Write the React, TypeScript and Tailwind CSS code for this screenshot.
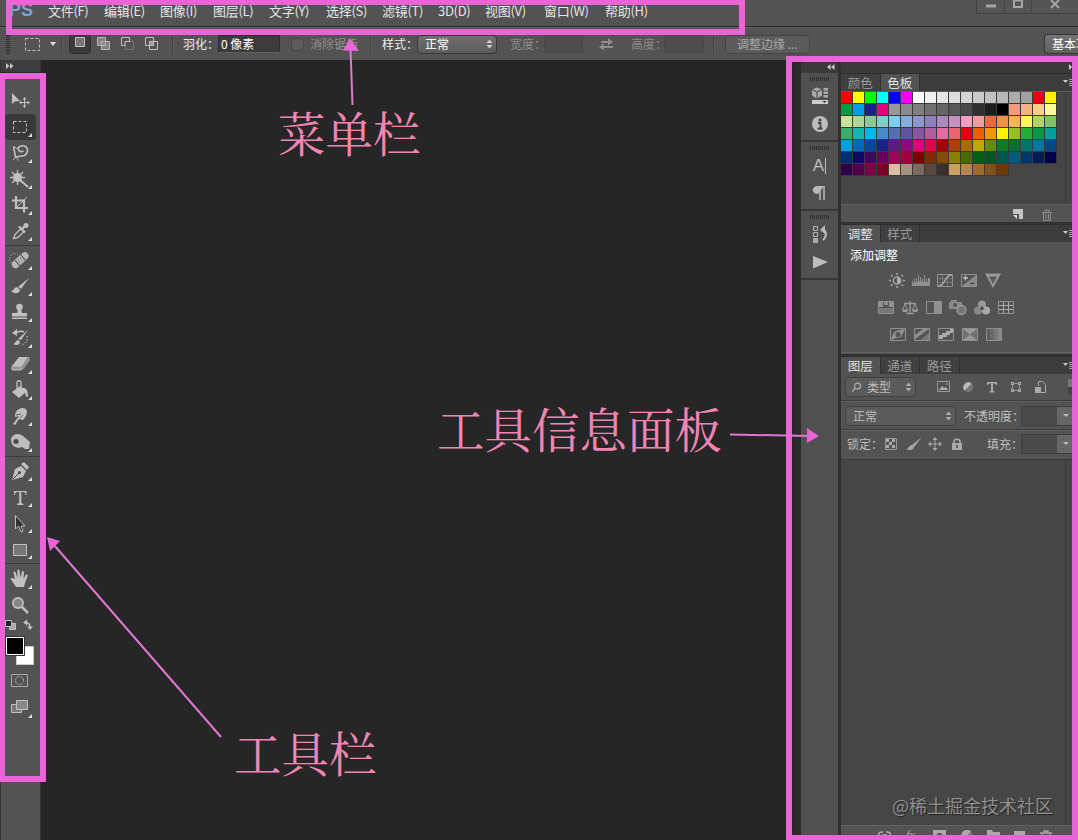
import React from 'react';

type Kids = { children?: React.ReactNode };

function Svg({ w, h, className = '', children }: Kids & { w: number; h: number; className?: string }) {
  return (
    <svg width={w} height={h} viewBox={`0 0 ${w} ${h}`} className={`block shrink-0 ${className}`} fill="none">
      {children}
    </svg>
  );
}

const L = '#c0c0c0';
const M = '#8e8e8e';

/* ---------- menu bar ---------- */

const menus = [
  { t: '文件(F)', w: 'w-[56px]' },
  { t: '编辑(E)', w: 'w-[56px]' },
  { t: '图像(I)', w: 'w-[53px]' },
  { t: '图层(L)', w: 'w-[56px]' },
  { t: '文字(Y)', w: 'w-[57px]' },
  { t: '选择(S)', w: 'w-[56px]' },
  { t: '滤镜(T)', w: 'w-[56px]' },
  { t: '3D(D)', w: 'w-[47px]' },
  { t: '视图(V)', w: 'w-[59px]' },
  { t: '窗口(W)', w: 'w-[61px]' },
  { t: '帮助(H)', w: 'w-[60px]' },
];

function MenuBar() {
  return (
    <header className="flex h-[27px] shrink-0 items-start border-b border-[#2c2c2c] bg-[#535353]">
      <div className="h-[22px] w-[48px] shrink-0 pl-[9px] font-['Liberation_Sans'] text-[18px] leading-[20px] font-bold text-[#7ba3d6]">PS</div>
      <nav className="flex h-[21px] items-center text-[13px] tracking-[-0.3px] text-[#e6e6e6]">
        {menus.map((m) => (
          <span key={m.t} className={`shrink-0 whitespace-nowrap ${m.w}`}>{m.t}</span>
        ))}
      </nav>
      <div className="ml-auto flex h-[14px] w-[102px] border-b border-l border-[#3f3f3f] bg-[#555]">
        <div className="w-[28px] border-r border-[#444]">
          <Svg w={27} h={13}><path d="M9 6h10" stroke="#a5a5a5" strokeWidth="3" /></Svg>
        </div>
        <div className="w-[27px] border-r border-[#444]">
          <Svg w={26} h={13}><path d="M9 .5h8v6.500H9z" stroke="#a5a5a5" strokeWidth="2" /></Svg>
        </div>
        <Svg w={46} h={13}><path d="M19 0l8 8M27 0l-8 8" stroke="#a5a5a5" strokeWidth="2" /></Svg>
      </div>
    </header>
  );
}

/* ---------- options bar ---------- */

function UpDown({ color = '#d0d0d0' }: { color?: string }) {
  return (
    <Svg w={7} h={10}>
      <path d="M0.5 4L3.5 0.5L6.5 4zM0.5 6L3.5 9.5L6.5 6z" fill={color} />
    </Svg>
  );
}

function Rule({ className }: { className: string }) {
  return <div className={`h-[20px] w-[2px] shrink-0 border-r border-l border-r-[#5c5c5c] border-l-[#404040] ${className}`} />;
}

function OptionsBar() {
  return (
    <div className="flex h-[33px] shrink-0 items-center overflow-hidden border-t border-[#5e5e5e] bg-[#535353] text-[12px] leading-none whitespace-nowrap text-[#eee]">
      <Svg w={4} h={19} className="ml-[6px]"><path d="M2 0v19" stroke="#2f2f2f" strokeWidth="4" strokeDasharray="1 1" /></Svg>
      <Svg w={15} h={13} className="ml-[15px]"><path d="M.5 .5h14v12H.5z" stroke={L} strokeDasharray="3 2" /></Svg>
      <Svg w={6} h={4} className="ml-[10px]"><path d="M0 0h6L3 4z" fill="#ddd" /></Svg>
      <Rule className="ml-[5px]" />
      <div className="ml-[6px] flex h-[20px] w-[22px] shrink-0 items-start justify-center rounded-sm border border-[#303030] bg-[#3b3b3b] pt-[2px]">
        <Svg w={10} h={11}><path d="M.5 .5h9v9h-9z" fill="#777" stroke={L} /></Svg>
      </div>
      <Svg w={14} h={14} className="ml-[6px]">
        <path d="M.5 .5h8v8h-8zM4.5 4.5h8v8h-8z" fill="#858585" stroke="#b5b5b5" />
      </Svg>
      <Svg w={14} h={14} className="ml-[10px]">
        <path d="M4.5 4.5h8v8h-8z" stroke="#757575" /><path d="M8.5 4V.5h-8v8H4v-4h5" stroke={L} />
      </Svg>
      <Svg w={14} h={14} className="ml-[10px]">
        <path d="M4.5 4.5h4v4h-4z" fill="#999" /><path d="M.5 .5h8v8h-8zM4.5 4.5h8v8h-8z" stroke={L} />
      </Svg>
      <Rule className="ml-[13px]" />
      <span className="ml-[9px] w-[35px] shrink-0">羽化：</span>
      <div className="flex h-[18px] w-[62px] shrink-0 items-center border border-[#2f2f2f] border-b-[#606060] bg-[#3b3b3b] pl-[2px] text-white">0 像素</div>
      <div className="ml-[11px] h-[13px] w-[13px] shrink-0 rounded-sm border border-[#454545] bg-[#5c5c5c]" />
      <span className="ml-[6px] w-[48px] shrink-0 text-[#909090]">消除锯齿</span>
      <Rule className="ml-[12px]" />
      <span className="ml-[10px] w-[35px] shrink-0">样式：</span>
      <div className="flex h-[19px] w-[80px] shrink-0 items-center justify-between rounded-sm border border-[#383838] bg-linear-to-b from-[#707070] to-[#5c5c5c] pr-[3px] pl-[7px] text-white">
        正常<UpDown />
      </div>
      <span className="ml-[13px] w-[34px] shrink-0 text-[#8c8c8c]">宽度：</span>
      <div className="h-[18px] w-[39px] shrink-0 border border-[#484848] bg-[#4d4d4d]" />
      <Svg w={15} h={13} className="ml-[16px]">
        <path d="M2 4h8M5 9h9" stroke={M} strokeWidth="2" /><path d="M9 0l5 4-5 3.500zM5 5.500v7L0 9z" fill={M} />
      </Svg>
      <span className="ml-[17px] w-[33px] shrink-0 text-[#8c8c8c]">高度：</span>
      <div className="h-[18px] w-[40px] shrink-0 border border-[#484848] bg-[#4d4d4d]" />
      <Rule className="ml-[9px]" />
      <div className="ml-[10px] flex h-[19px] w-[85px] shrink-0 items-center rounded-sm border border-[#444] bg-[#5b5b5b] pl-[11px] text-[#a8a8a8]">调整边缘 ...</div>
      <div className="ml-auto flex h-[20px] w-[34px] shrink-0 items-center overflow-hidden rounded-l-sm border border-r-0 border-[#363636] bg-linear-to-b from-[#747474] to-[#606060] pl-[7px] text-white">基本功能</div>
    </div>
  );
}

/* ---------- tool bar ---------- */

const toolGroups: { name: string; art: React.ReactNode; more?: boolean; on?: boolean }[][] = [
  [
    { name: 'move', art: <><path d="M7 5v11l3-2.500 5-.5z" fill={L} /><path d="M19.500 10v9M15 14.500h9" stroke={L} /><path d="M19.500 9l2 2.500h-4zM19.500 20l2-2.500h-4zM14 14.500l2.500-2v4zM25 14.500l-2.500-2v4z" fill={L} /></> },
    { name: 'marquee', more: true, on: true, art: <path d="M8.500 7.500h13v11h-13z" stroke={L} strokeDasharray="3 2" /> },
    { name: 'lasso', more: true, art: <><path d="M8.500 6.500l2 10.500 9-1.500c4-3 4-8 0-9.500-4-1-7 1-6 4 1 2 3 2 5 1" stroke={L} strokeWidth="1.600" /><path d="M8.500 6.500l5 2.500M11 17l-3 3M11 17l2.500 3.500" stroke={L} /></> },
    { name: 'wand', more: true, art: <><path d="M12.500 4v15M5 11.500h15M7 6l11 11M18 6L7 17" stroke={L} strokeWidth="1.300" /><circle cx="12.500" cy="11.500" r="4.500" fill={L} /><path d="M15 14l8 7" stroke={L} strokeWidth="2" /></> },
    { name: 'crop', more: true, art: <><path d="M11 4v12h12M7 8.500h12v12" stroke={L} strokeWidth="2.200" /><path d="M12 15L22 5" stroke={L} /></> },
    { name: 'eyedropper', more: true, art: <><path d="M8.500 20.500l1.500-4 6-6 3 3-6 6z" stroke={L} strokeWidth="1.300" /><path d="M14 8.500l6 6M17 11l4-4" stroke={L} strokeWidth="2.200" /><circle cx="21" cy="7.500" r="2.500" fill={L} /></> },
  ],
  [
    { name: 'heal', more: true, art: <><circle cx="10" cy="12" r="5.500" stroke={L} strokeDasharray="1 1.500" /><g transform="rotate(-42 15 13)"><rect x="5" y="9.500" width="20" height="7.500" rx="3.700" fill="#b8b8b8" /><path d="M11 10v7M19 10v7" stroke="#555" /><path d="M13 12h1M16 12h1M13 14.500h1M16 14.500h1" stroke="#444" /></g></> },
    { name: 'brush', more: true, art: <><path d="M24 5l-8 11-3-2z" fill={L} /><path d="M6 18c3 0 3-4 6-4l3 3c0 3-5 5-9 1z" fill={L} /></> },
    { name: 'stamp', more: true, art: <><circle cx="14.500" cy="8" r="3.300" fill={L} /><path d="M13 10h3l1 4h5v3.500H7V14h5zM7 18.500h15V20H7z" fill={L} /></> },
    { name: 'history', more: true, art: <><path d="M23 5l-7 10-3-1z" fill={L} /><path d="M8 19c2 0 3-4 5-4l2 2c0 3-4 4-7 2z" fill={L} /><path d="M10 8c4-2 7-2 9-1" stroke={L} strokeWidth="1.500" /><path d="M7 8l5-4v7z" fill={L} /><path d="M22 11c1 5-1 8-6 9" stroke={L} strokeDasharray="1.500 1.500" /></> },
    { name: 'eraser', more: true, art: <><path d="M7 15l7-9h9l-6 9z" fill={L} /><path d="M7 15v4h9v-4z" fill="#999" stroke={L} /><path d="M17 15v4l7-9V6z" fill="#8c8c8c" stroke="#b0b0b0" strokeWidth=".700" /></> },
    { name: 'bucket', more: true, art: <><path d="M7 15l8-6 6 6-7 6z" fill={L} /><path d="M12 14V6c0-3 4-3 4 0v5" stroke={L} strokeWidth="1.300" /><path d="M16 11c5-1 7 2 7 9-2 0-3-2-3-5z" fill={L} /></> },
    { name: 'smudge', more: true, art: <><path d="M8 21l6-8-4 1c0-5 2-8 7-9 5 0 6 3 4 8l-3 4-4-1-4 6z" fill={L} /><path d="M11 12l5-1M15 15l3-3" stroke="#666" /></> },
    { name: 'sponge', more: true, art: <><path d="M6 10c2-6 8-6 12-3l7 6-1 7h-4l-3-2c-5 2-11 0-11-8z" fill="#bdbdbd" /><circle cx="11" cy="12.500" r="2.500" fill="#444" stroke="#777" /></> },
  ],
  [
    { name: 'pen', more: true, art: <><path d="M7 22l3-11 6-3 5 5-3 6z" fill={L} /><path d="M16 6l3-2 5 5-2 3z" fill={L} /><path d="M8 21l6-6" stroke="#444" /><circle cx="14.500" cy="14.500" r="1.500" fill="#444" /></> },
    { name: 'type', more: true, art: <path d="M9 7h12.500v4h-.8c-.2-2-1-3-2.700-3h-1.700v11l2.200 1v1H12v-1l2.200-1V8h-1.700c-1.700 0-2.500 1-2.700 3H9z" fill={L} /> },
    { name: 'path', more: true, art: <path d="M10.500 5.500V19l3-3 2.500 6 2-1-2-5h4z" fill="#303030" stroke={L} /> },
    { name: 'rectangle', more: true, art: <path d="M8.500 8.500h13v11h-13z" fill="#777" stroke={L} /> },
  ],
  [
    { name: 'hand', more: true, art: <path d="M11 21L6 13.500c-.5-2 2-2 4 0L8.500 7c0-2 2-2 2.300 0L12.500 12l-.2-7c0-2 2.200-2 2.300 0l.9 7 1.300-6c.5-1.800 2.400-1.200 2.200.5L18.500 13l2-4c1-1.500 2.800-.5 2 1.200L20 17l-1 4z" fill={L} /> },
    { name: 'zoom', art: <><circle cx="13" cy="11" r="5" fill="#858585" stroke={L} strokeWidth="1.800" /><path d="M17 15l6 6" stroke={L} strokeWidth="2.500" /></> },
  ],
];

function ToolBar() {
  return (
    <aside className="flex h-full w-[41px] shrink-0 flex-col border-r border-l border-[#333] bg-[#535353]">
      <div className="flex h-[13px] shrink-0 items-center border-b border-[#2a2a2a] bg-[#3d3d3d] pl-[5px]">
        <Svg w={8} h={6}><path d="M0 0l3.500 3L0 6zM4 0l3.500 3L4 6z" fill="#c8c8c8" /></Svg>
      </div>
      <div className="flex flex-col pt-[15px] pl-[4px]">
        {toolGroups.map((g, i) => (
          <div key={i} className={i === 0 ? 'flex flex-col pb-px' : i === 3 ? 'flex flex-col border-t border-[#3b3b3b] pt-[2px] pb-px' : 'flex flex-col border-t border-[#3b3b3b] pt-px pb-px'}>
            {g.map((t) => (
              <div key={t.name} className={t.on ? 'h-[26px] w-[31px] rounded-sm bg-[#393939]' : 'h-[26px] w-[31px]'}>
                <Svg w={31} h={26}>
                  {t.art}
                  {t.more && <path d="M27 19v4h-4z" fill="#ddd" />}
                </Svg>
              </div>
            ))}
          </div>
        ))}
        <Svg w={31} h={14}>
          <path d="M4.500 4.500h6v6h-6z" fill="#aaa" stroke={L} /><path d="M.5 1.500h6v6h-6z" fill="#222" stroke={L} />
          <path d="M20 3.500c4 0 5 2 5 5" stroke={L} strokeWidth="1.500" /><path d="M18 3.500l4-3v6zM25 11l-3-3.500h6z" fill={L} />
        </Svg>
        <Svg w={31} h={34}>
          <path d="M11.500 13.500h17v18h-17z" fill="#fff" stroke="#ccc" />
          <path d="M1.500 4.500h17v17h-17z" fill="#000" stroke="#fff" /><path d="M.5 3.500h19v19H.5z" stroke="#333" />
        </Svg>
        <Svg w={31} h={26}>
          <path d="M6.500 7.500h16v12h-16z" stroke="#a8a8a8" /><circle cx="14.500" cy="13.500" r="4" stroke={L} strokeDasharray="1.500 1" />
        </Svg>
        <Svg w={31} h={28}>
          <path d="M6.500 11.500h10v8h-10z" fill="#777" stroke={L} /><path d="M11.500 7.500h11v9h-11z" fill="#888" stroke={L} /><path d="M27 21v4h-4z" fill="#ddd" />
        </Svg>
      </div>
    </aside>
  );
}

/* ---------- collapsed dock ---------- */

function DockGroup({ children }: Kids) {
  return (
    <div className="flex h-[69px] shrink-0 flex-col items-center border-b-2 border-[#383838] pt-[4px]">
      <Svg w={20} h={4}><path d="M0 2h20" stroke="#2f2f2f" strokeWidth="4" strokeDasharray="1 1" /></Svg>
      <div className="flex flex-col pt-[2px]">{children}</div>
    </div>
  );
}

function Dock() {
  return (
    <div className="flex w-[37px] shrink-0 flex-col bg-[#505050]">
      <div className="flex h-[13px] shrink-0 items-center bg-[#3a3a3a] pl-[26px]">
        <Svg w={8} h={6}><path d="M3.500 0v6L0 3zM7.500 0v6L4 3z" fill="#c8c8c8" /></Svg>
      </div>
      <DockGroup>
        <Svg w={20} h={28}>
          <path d="M7 4.500l5 2v6l-5 3-5-3v-6z" fill="#aaa" /><path d="M2 6.500L7 9l5-2.500M7 9v6.500" stroke="#444" />
          <path d="M13.500 5h4.500v2.500h-4.500zM13.500 8.500h4.500v2.500h-4.500zM13.500 12h4.500v2.500h-4.500z" fill="#aaa" /><path d="M2 17h16v4H2z" fill="#ccc" /><path d="M12.500 18h4l-2 2z" fill="#333" />
        </Svg>
        <Svg w={20} h={28}>
          <circle cx="10" cy="13" r="8" fill="#bdbdbd" /><circle cx="10" cy="9" r="1.600" fill="#444" /><path d="M8 12h2.500v6M7.500 17.500h5" stroke="#444" strokeWidth="1.800" />
        </Svg>
      </DockGroup>
      <DockGroup>
        <div className="flex h-[28px] w-[20px] items-center justify-center font-['Liberation_Sans'] text-[17px] text-[#bdbdbd]">A<span className="ml-px h-[16px] w-px shrink-0 bg-[#bdbdbd]" /></div>
        <Svg w={20} h={28}>
          <path d="M14 6H8c-7 0-7 8 0 8z" fill="#b8b8b8" /><path d="M10 6v14M14 6v14" stroke="#bbb" strokeWidth="1.500" />
        </Svg>
      </DockGroup>
      <DockGroup>
        <Svg w={20} h={28}>
          <path d="M3.500 5.500h4v4h-4zM3.500 11.500h4v4h-4z" stroke="#b5b5b5" /><path d="M3 17h5v5H3z" fill="#aaa" />
          <path d="M11 9c5-1 7 5 2 10" stroke="#bbb" strokeWidth="2" /><path d="M10 9l5-5v9z" fill="#bbb" />
        </Svg>
        <Svg w={20} h={28}><path d="M3 7l15 6L3 19.500z" fill="#bdbdbd" /></Svg>
      </DockGroup>
    </div>
  );
}

/* ---------- panels ---------- */

function Tabs({ names, active }: { names: string[]; active: number }) {
  return (
    <div className="flex h-[18px] shrink-0 border-t border-[#2d2d2d] bg-[#3c3c3c] text-[12.500px] leading-[17px]">
      {names.map((n, i) => (
        <div
          key={n}
          className={
            i === active
              ? 'w-[39.500px] shrink-0 border-r border-[#303030] bg-[#535353] text-center text-[#e2e2e2]'
              : 'w-[39.500px] shrink-0 border-r border-[#303030] bg-[#404040] text-center text-[#999]'
          }
        >
          {n}
        </div>
      ))}
      <Svg w={12} h={10} className="mt-[4px] mr-[3px] ml-auto">
        <path d="M0 2h5L2.500 5z" fill="#ccc" /><path d="M6 1.500h6M6 3.500h6M6 5.500h6M6 7.500h6" stroke="#bbb" strokeWidth=".8" />
      </Svg>
    </div>
  );
}

const swatchRows = [
  'ff0000 ffff00 00ff00 00ffff 0000ff ff00ff ffffff efefef e4e4e4 dddddd d4d4d4 cacaca c0c0c0 b7b7b7 acacac a2a2a2 e60012 fff100',
  '009944 00a0e9 1d2088 e4007f 989898 8b8b8b 7f7f7f 717171 646464 575757 4a4a4a 303030 1e1e1e 000000 f29b76 f6b37f facd89 fff799',
  'cce198 acd598 89c997 84ccc9 7ecef4 88abda 8c97cb 8f82bc aa89bd c490bf f19ec2 f29c9f eb6841 f19149 f8b551 fff45c b3d465 80c269',
  '32b16c 13b5b1 00b7ee 448aca 556fb5 5f52a0 8957a1 ae5da1 ea68a2 e96671 e60012 eb6100 f39800 fff100 8fc31f 22ac38 009944 009e96',
  '00a0e9 0068b7 00479d 1d2088 601986 920783 e4007f e5004f a40000 a84200 ac6a00 b7aa00 638c0b 097c25 007130 00736d 0075a9 004986',
  '002e73 100964 440062 6a005f a4005b a0003b 7d0000 7f2d00 834e00 8a8000 486a00 005e15 00561f 005752 005982 00366f 001c58 02004b',
  '2f004c 500047 7b0046 78002a d6bfa6 a39480 796b60 594840 3c302b c9a063 b28850 9e6b2d 81511c 6a3906',
].map((r) => r.split(' '));

function SwatchPanel() {
  return (
    <section className="flex h-[149px] shrink-0 flex-col">
      <Tabs names={['颜色', '色板']} active={1} />
      <div className="flex h-[114px] shrink-0 border-t border-b border-t-[#5a5a5a] border-b-[#606060] bg-[#464646]">
        <div className="flex w-[225px] flex-col border-r border-[#3a3a3a]">
          {swatchRows.map((r, i) => (
            <div key={i} className="flex h-[12px] w-[216px]">
              {r.map((c, k) => (
                <div key={k} className="h-[12px] w-[12px] shrink-0 border-r border-b border-[#3a3a3a]" style={{ backgroundColor: `#${c}` }} />
              ))}
            </div>
          ))}
        </div>
      </div>
      <div className="flex grow items-center pt-[2px] pl-[172px]">
        <Svg w={11} h={11}><path d="M0 0h10v10H6V5H0z" fill="#c4c4c4" /><path d="M0 6l4 4V6z" fill="#ddd" /></Svg>
        <Svg w={12} h={12} className="ml-[17px]"><path d="M1 3.500h10M4 3V1h4v2M2.500 4v7.500h7V4M5 5v5M7.500 5v5" stroke="#8d8d8d" /></Svg>
      </div>
    </section>
  );
}

const box = <path d="M1.500 1.500h15v12h-15z" stroke="#909090" />;
const adjustments: { pad: string; icons: React.ReactNode[] }[] = [
  {
    pad: 'pl-[44px]',
    icons: [
      <><circle cx="9" cy="7.500" r="3.700" stroke="#aaa" strokeWidth="1.300" /><path d="M9 4a3.500 3.500 0 010 7z" fill="#aaa" /><path d="M9 0v2M9 13v2M1 7.500h2M15 7.500h2M3 2l1.500 1.500M13.500 11.500L15 13M15 2l-1.500 1.500M3 13l1.500-1.500" stroke="#aaa" strokeWidth="1.500" /></>,
      <path d="M0 13V8h1v2h1V6h1v3h1V5h1v4h1V2h1v6h1V4h1v4h1V6h1v3h1V2h1v7h1V6h1v3h1V5h2v8z" fill="#909090" />,
      <>{box}<path d="M6.500 2v11M11.500 2v11M2 5.500h14M2 9.500h14" stroke="#777" /><path d="M2 13c8 0 6-11 14-11" stroke="#aaa" strokeWidth="1.500" /></>,
      <>{box}<path d="M2 13L16 2v11z" fill="#8a8a8a" /><path d="M3 5h5M5.500 2.500v5" stroke="#bbb" strokeWidth="1.300" /><path d="M10 10.500h4" stroke="#444" strokeWidth="1.300" /></>,
      <><path d="M1 .5h16L9 15z" fill="#999" /><path d="M5 3.500h8L9 11z" fill="#5b5b5b" /></>,
    ],
  },
  {
    pad: 'pl-[33px]',
    icons: [
      <>{box}<path d="M2 2h4v5H2zM7 2h4v3H7zM12 2h4v5h-4z" fill="#909090" /><path d="M2 8h14v5H2z" fill="#777" /></>,
      <><path d="M9 1v12M3 3.500h12M5 13.500h8" stroke="#999" strokeWidth="1.500" /><path d="M4 4l-2.500 6h5zM14 4l-2.500 6h5z" stroke="#999" /><path d="M1 10h6l-1 2H2zM11 10h6l-1 2h-4z" fill="#999" /></>,
      <>{box}<path d="M9 2h7v11H9z" fill="#909090" /></>,
      <><path d="M0 2h2V0h6v2h5v7H0z" fill="#8a8a8a" /><circle cx="6" cy="5" r="2" fill="#555" /><circle cx="12.500" cy="10" r="4.500" fill="#777" stroke="#999" strokeWidth="1.300" /></>,
      <><circle cx="9" cy="4.500" r="4" fill="#999" /><circle cx="5" cy="10.500" r="4" fill="#8a8a8a" /><circle cx="13" cy="10.500" r="4" fill="#aaa" /><path d="M9 6l2.500 3.500h-5z" fill="#444" /></>,
      <>{box}<path d="M6.500 2v11M11.500 2v11M2 5.500h14M2 9.500h14" stroke="#aaa" /></>,
    ],
  },
  {
    pad: 'pl-[45px]',
    icons: [
      <>{box}<path d="M2 13c2-9 5-10 14-11l-4 8-5 1z" fill="#909090" /><circle cx="9" cy="7.500" r="2.500" fill="#555" /></>,
      <>{box}<path d="M2 8l8-6h6L2 12z" fill="#909090" /><path d="M7 13l9-7v7z" fill="#777" /></>,
      <>{box}<path d="M2 8h3V6h4V4h4V2h3v4h-3v2h-3v2H6v2H2z" fill="#aaa" /></>,
      <>{box}<path d="M2 2l7 5.500L2 13zM16 2L9 7.500l7 5.500z" fill="#707070" /><path d="M2 2h14L9 7.500zM2 13h14L9 7.500z" fill="#999" /></>,
      <>{box}<path d="M2 2h3v11H2z" fill="#5c5c5c" /><path d="M5 2h4v11H5z" fill="#6a6a6a" /><path d="M9 2h4v11H9z" fill="#787878" /><path d="M13 2h3v11h-3z" fill="#888" /></>,
    ],
  },
];

function AdjustPanel() {
  return (
    <section className="flex h-[132px] shrink-0 flex-col border-t-2 border-[#333]">
      <Tabs names={['调整', '样式']} active={0} />
      <div className="flex h-[111px] shrink-0 flex-col border-b border-[#626262] bg-[#535353] pt-[4px]">
        <div className="h-[21px] shrink-0 pl-[9px] text-[12px] leading-[18px] text-white">添加调整</div>
        {adjustments.map((row, i) => (
          <div key={i} className={`flex h-[27px] shrink-0 items-center ${row.pad}`}>
            {row.icons.map((icon, k) => (
              <div key={k} className="flex w-[24px] shrink-0 justify-center"><Svg w={18} h={15}>{icon}</Svg></div>
            ))}
          </div>
        ))}
      </div>
    </section>
  );
}

function ValueBox() {
  return (
    <div className="ml-auto flex h-[20px] w-[57px] shrink-0 border border-[#3e3e3e] bg-[#4a4a4a]">
      <div className="ml-[35px] flex grow items-center bg-[#666] pl-[6px]">
        <Svg w={6} h={4}><path d="M0 0h6L3 3z" fill="#bbb" /></Svg>
      </div>
    </div>
  );
}

function LayersPanel() {
  return (
    <section className="flex min-h-0 grow flex-col border-t-2 border-[#333] text-[12px] text-[#bdbdbd]">
      <Tabs names={['图层', '通道', '路径']} active={0} />
      <div className="flex h-[27px] shrink-0 items-center border-b border-[#3d3d3d] pl-[4px]">
        <div className="flex h-[20px] w-[71px] shrink-0 items-center rounded-sm border border-[#414141] bg-[#5b5b5b] pr-[3px] pl-[6px]">
          <Svg w={10} h={10}><circle cx="5.500" cy="4" r="3" stroke="#aaa" strokeWidth="1.300" /><path d="M3.500 6L0 9.500" stroke="#aaa" strokeWidth="1.500" /></Svg>
          <span className="mr-auto ml-[5px]">类型</span>
          <UpDown color="#aaa" />
        </div>
        <Svg w={14} h={12} className="ml-[21px]"><path d="M.5 .5h12v10H.5z" stroke="#999" /><path d="M2 9l3-4 2 2 2-1 2 3z" fill="#aaa" /><path d="M9 3h2" stroke="#aaa" /></Svg>
        <Svg w={12} h={12} className="ml-[11px]"><circle cx="6" cy="6" r="5" fill="#777" /><path d="M9.500 2.500A5 5 0 002.500 9.500z" fill="#bbb" /></Svg>
        <Svg w={12} h={12} className="ml-[12px]"><path d="M1 1h10v3h-1L9 2.500H7V10l1.500.5v1h-5v-1L5 10V2.500H3L2 4H1z" fill="#aaa" /></Svg>
        <Svg w={12} h={12} className="ml-[12px]"><path d="M2.500 2.500h7v7h-7z" stroke="#999" /><path d="M1 1h3v3H1zM8 1h3v3H8zM1 8h3v3H1zM8 8h3v3H8z" fill="#aaa" /><path d="M2 2h1v1H2zM9 2h1v1H9zM2 9h1v1H2zM9 9h1v1H9z" fill="#555" /></Svg>
        <Svg w={12} h={12} className="ml-[12px]"><path d="M4.500 5V.5h4l3 3v8H7" stroke="#aaa" /><path d="M1 6h6v6H1z" fill="#aaa" /></Svg>
        <div className="ml-auto h-[16px] w-[10px] shrink-0 bg-[#444]"><div className="h-[8px] bg-[#777]" /></div>
      </div>
      <div className="flex h-[29px] shrink-0 items-center border-t border-b border-t-[#606060] border-b-[#3d3d3d] pl-[4px]">
        <div className="flex h-[20px] w-[111px] shrink-0 items-center justify-between rounded-sm border border-[#414141] bg-[#5b5b5b] pr-[3px] pl-[7px]">
          正常<UpDown color="#aaa" />
        </div>
        <span className="ml-[8px] w-[50px] shrink-0 whitespace-nowrap">不透明度：</span>
        <ValueBox />
      </div>
      <div className="flex h-[29px] shrink-0 items-center border-t border-[#606060] pb-[2px] pl-[6px]">
        <span className="w-[38px] shrink-0 whitespace-nowrap">锁定：</span>
        <Svg w={12} h={12}><path d="M.5 .5h11v11H.5z" stroke="#999" /><path d="M1 1h3v3H1zM7 1h3v3H7zM4 4h3v3H4zM1 7h3v3H1zM7 7h3v3H7z" fill="#aaa" /></Svg>
        <Svg w={16} h={14} className="ml-[9px]"><path d="M16 0L8 10 6 8z" fill="#aaa" /><path d="M0 12c3 0 3-4 6-4l2 2c0 3-5 4-8 2z" fill="#aaa" /></Svg>
        <Svg w={14} h={14} className="ml-[6px]"><path d="M7 2v10M2 7h10" stroke="#aaa" /><path d="M7 0l2.500 3h-5zM7 14l2.500-3h-5zM0 7l3-2.500v5zM14 7l-3-2.500v5z" fill="#aaa" /></Svg>
        <Svg w={10} h={12} className="ml-[10px]"><path d="M0 5h10v7H0z" fill="#aaa" /><path d="M2 5V3.500c0-3 6-3 6 0V5" stroke="#aaa" strokeWidth="1.500" /><path d="M5 7v3" stroke="#444" strokeWidth="1.500" /></Svg>
        <span className="ml-[25px] w-[33px] shrink-0 whitespace-nowrap">填充：</span>
        <ValueBox />
      </div>
      <div className="flex min-h-0 grow border-t border-[#393939] bg-[#464646]">
        <div className="flex w-[225px] items-end justify-end border-r border-[#3a3a3a] pr-[12px] pb-[7px]">
          <span className="text-[18px] leading-[26px] whitespace-nowrap text-[#8f8f8f] [text-shadow:1px_1px_1px_#222]">@稀土掘金技术社区</span>
        </div>
      </div>
      <div className="flex h-[15px] shrink-0 items-start border-t border-[#626262] pt-[4px] pl-[37px]">
        <Svg w={13} h={10}><path d="M5 2H3.500c-4 0-4 6 0 6H5M8 2h1.500c4 0 4 6 0 6H8M4 5h5" stroke="#aaa" strokeWidth="1.500" /></Svg>
        <span className="ml-[15px] h-[10px] w-[14px] font-['Liberation_Serif'] text-[13px] leading-[10px] text-[#aaa] italic">fx</span>
        <Svg w={13} h={10} className="ml-[13px]"><path d="M0 0h13v11H0z" fill="#aaa" /><circle cx="6.500" cy="6" r="3" fill="#555" /></Svg>
        <Svg w={12} h={10} className="ml-[15px]"><circle cx="6" cy="5.500" r="5.500" fill="#777" /><path d="M10 1.500A5.500 5.500 0 002 9.500z" fill="#aaa" /></Svg>
        <Svg w={13} h={10} className="ml-[14px]"><path d="M0 0h5l1 2h7v9H0z" fill="#aaa" /></Svg>
        <Svg w={11} h={10} className="ml-[14px]"><path d="M0 1h11v11H6V6H0z" fill="#aaa" /></Svg>
        <Svg w={12} h={10} className="ml-[15px]"><path d="M0 3h12M4 3V1h4v2M2 4v8M10 4v8M6 5v6" stroke="#aaa" strokeWidth="1.300" /></Svg>
      </div>
    </section>
  );
}

/* ---------- notes laid over the window ---------- */

function Notes() {
  const label = "absolute text-[47.500px] leading-[56px] font-normal whitespace-nowrap text-[#f385b6] font-['Noto_Serif_CJK_SC','Noto_Serif_SC','Noto_Sans_CJK_SC',serif]";
  return (
    <div className="pointer-events-none absolute inset-0">
      <div className="absolute top-[-1px] left-[6px] h-[36px] w-[739px] border-[6px] border-[#e964d6]" />
      <div className="absolute top-[73px] left-[-1px] h-[709px] w-[47px] border-[6px] border-[#e964d6]" />
      <div className="absolute top-[56px] left-[786px] h-[785px] w-[292px] border-[6px] border-[#e964d6]" />
      <svg width="1078" height="840" viewBox="0 0 1078 840" className="absolute inset-0" fill="none">
        <path d="M352.500 105L350.500 48M221 737L54 545M730 434.500L810 436" stroke="#e277d3" strokeWidth="2" />
        <path d="M350 38l9 13-16-.5zM47 537l13 4-10 10zM819 436l-12-8v15z" fill="#e964d6" />
      </svg>
      <div className={`${label} top-[104px] left-[278px]`}>菜单栏</div>
      <div className={`${label} top-[400px] left-[437px]`}>工具信息面板</div>
      <div className={`${label} top-[724px] left-[234px]`}>工具栏</div>
    </div>
  );
}

export default function App() {
  return (
    <div className="relative flex h-[840px] w-[1078px] flex-col overflow-hidden bg-[#262626] font-['Noto_Sans_CJK_SC',sans-serif]">
      <MenuBar />
      <OptionsBar />
      <div className="flex min-h-0 grow">
        <ToolBar />
        <main className="grow bg-[#262626]" />
        <div className="flex w-[285px] shrink-0 border-l-[8px] border-[#2b2b2b] bg-[#303030]">
          <Dock />
          <div className="ml-[3px] flex min-w-0 grow flex-col bg-[#535353]">
            <div className="flex h-[13px] shrink-0 items-center justify-end bg-[#3a3a3a] pr-[5px]">
              <Svg w={4} h={6}><path d="M0 0l3 3-3 3z" fill="#ccc" /></Svg>
            </div>
            <SwatchPanel />
            <AdjustPanel />
            <LayersPanel />
          </div>
        </div>
      </div>
      <Notes />
    </div>
  );
}
